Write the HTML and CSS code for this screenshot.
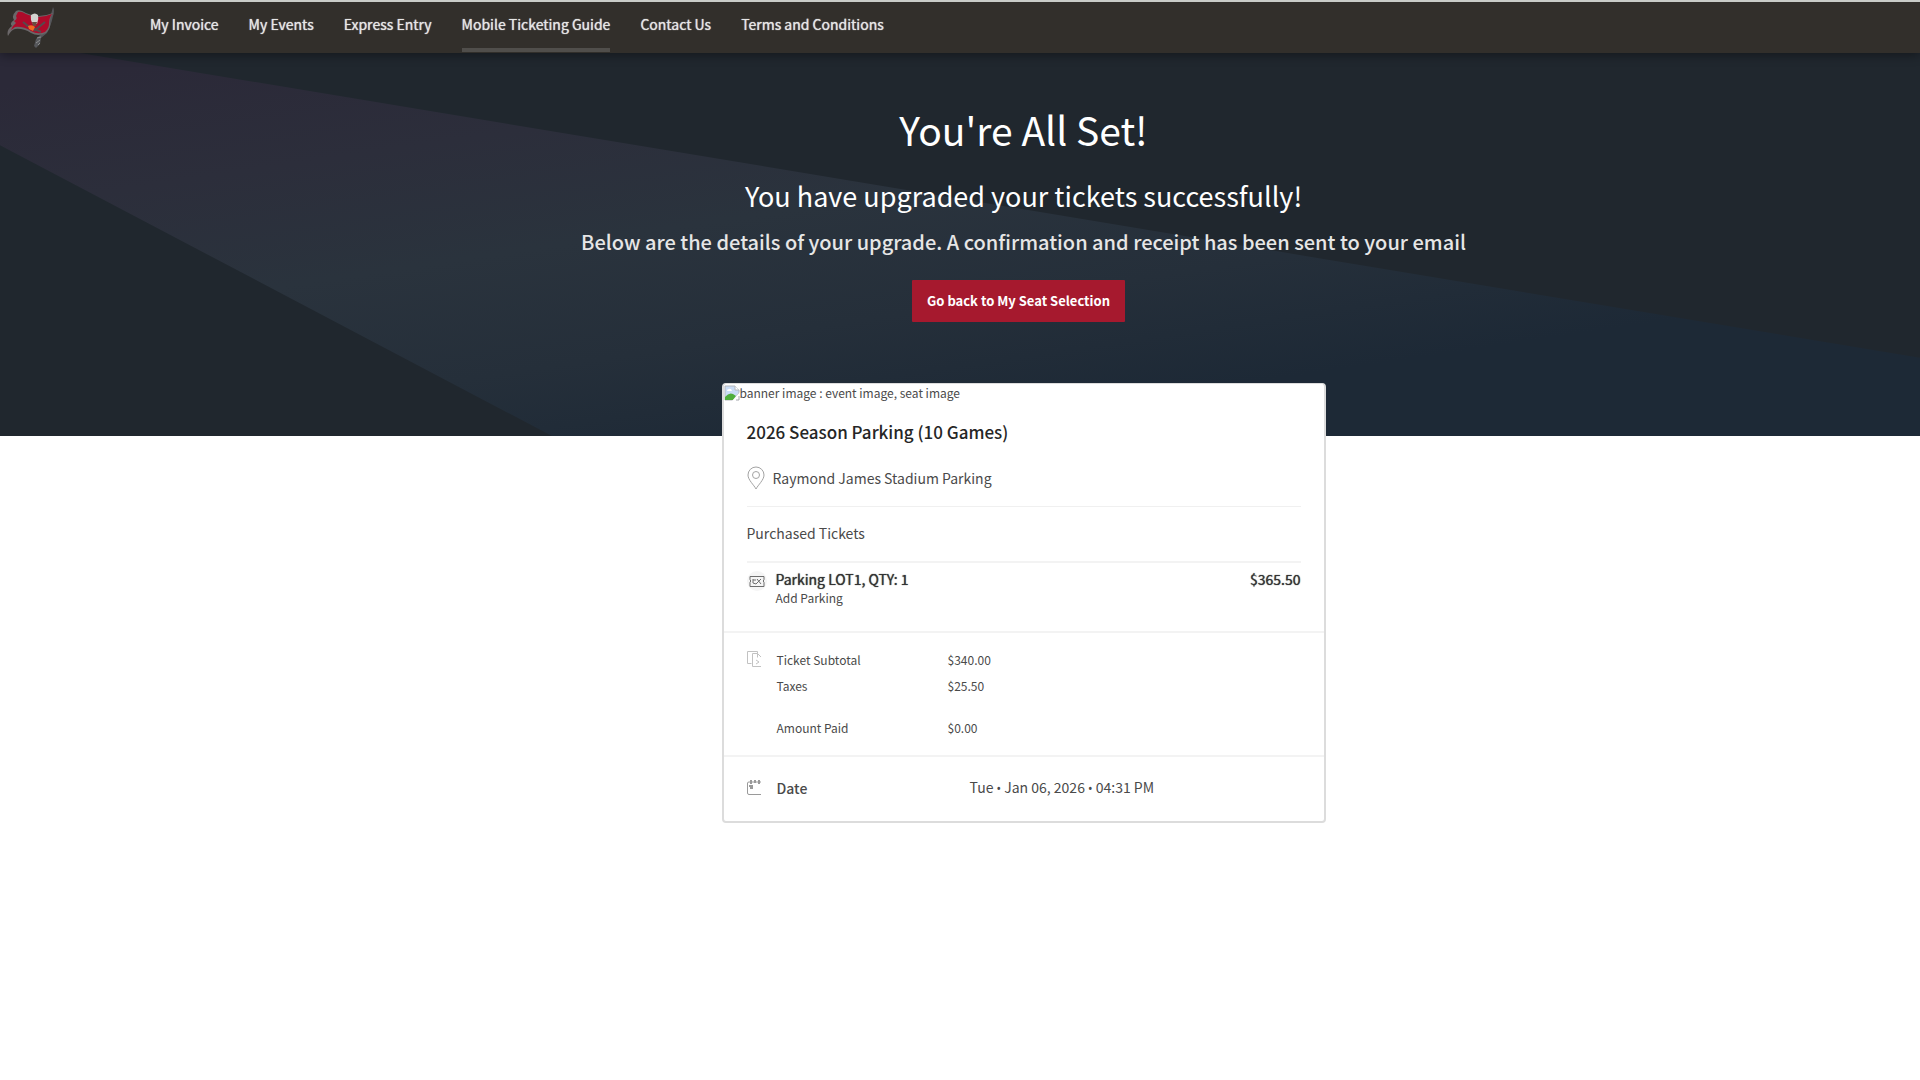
FILE: index.html
```html
<!DOCTYPE html>
<html lang="en">

<head>
    <meta charset="UTF-8" />
    <meta name="viewport" content="width=device-width, initial-scale=1" />
    <title>Upgrade Confirmation</title>
    <link rel="stylesheet" href="styles.css">
</head>

<body>
    <header class="topbar">
        <a class="logo" href="#" aria-label="Home">
            <svg viewBox="0 0 50 44" width="50" height="44">
                <path d="M46 1 Q48 5 46 10 Q44 20 40 27 L34 32 L33 38 L29 42 L27 40 L29 33 L34 28 L43 12 Z" fill="#55565a" />
                <path d="M9 5 Q13 3 19 7 Q31 13 46 7 Q43 11 43 17 Q44 22 39 27 Q31 31 24 27 Q16 22 8 23 Q4 24 1 30 Q-1 24 5 20 Q2 17 7 14 Q4 10 9 5 Z" fill="#6b6769" />
                <path d="M11 6 Q14 5 19 8 Q31 14 45 8 Q42 12 42 18 Q42 22 38 26 Q31 29 24 25 Q16 20 8 21 L4 24 Q5 20 9 17 L7 15 Q11 13 9 10 Z" fill="#ae0b2a" />
                <path d="M19 19 L34 26 M38 16 L27 25 M16 16 L21 20" stroke="#564a4d" stroke-width="2" fill="none" />
                <path d="M24 9 Q28 6 31 9 Q32 13 30 18 L26 18 Q23 14 24 9 Z" fill="#d2d2ce" />
                <path d="M25 16 L30 16 L29 20 L26 20 Z" fill="#6d4b3f" />
                <path d="M21 20 Q25 18 28 21 L26 25 L22 23 Z" fill="#f26a21" />
                <path d="M30 32 L34 31 M29 37 L33 34 M31 39 L33 37" stroke="#8b8c8d" stroke-width="1" />
            </svg>
        </a>
        <nav class="menu">
            <a href="#">My Invoice</a>
            <a href="#">My Events</a>
            <a href="#">Express Entry</a>
            <a href="#" class="active">Mobile Ticketing Guide</a>
            <a href="#">Contact Us</a>
            <a href="#">Terms and Conditions</a>
        </nav>
    </header>

    <section class="hero">
        <svg class="hero-bg" viewBox="0 0 1920 382" preserveAspectRatio="none" aria-hidden="true">
            <defs>
                <linearGradient id="beam" gradientUnits="userSpaceOnUse" x1="500" y1="-40" x2="570" y2="430">
                    <stop offset="0" stop-color="#2b2938" />
                    <stop offset="0.25" stop-color="#2c2e3b" />
                    <stop offset="0.5" stop-color="#2a333d" />
                    <stop offset="0.75" stop-color="#252f3a" />
                    <stop offset="1" stop-color="#1d2936" />
                </linearGradient>
            </defs>
            <polygon points="0,0 80,0 1920,304 1920,382 552,382 0,92" fill="url(#beam)" />
        </svg>
        <h1>You're All Set!</h1>
        <h2>You have upgraded your tickets successfully!</h2>
        <p>Below are the details of your upgrade. A confirmation and receipt has been sent to your email</p>
        <button type="button" class="back-btn">Go back to My Seat Selection</button>
    </section>

    <main>
        <div class="card">
            <div class="banner">
                <svg viewBox="0 0 16 16" width="16" height="16" aria-hidden="true">
                    <path d="M1 1 H11 L15 5 V8 L9 15 H1 Z" fill="#c9dcf5" stroke="#b5b8bd" />
                    <path d="M11 1 V5 H15" fill="#ffffff" stroke="#b5b8bd" />
                    <path d="M3 6 Q3 4 5 4 Q7 3 8 6 Z" fill="#ffffff" />
                    <path d="M1 15 V12 Q5 7 9 9 L12 11 L9 15 Z" fill="#4fae3c" />
                    <path d="M8 16 L16 7 V10 L11 16 Z" fill="#ffffff" />
                    <path d="M12 15 H15 V11" fill="none" stroke="#a5a8ad" />
                </svg>
                <span>banner image : event image, seat image</span>
            </div>

            <div class="event">
                <h3>2026 Season Parking (10 Games)</h3>
                <div class="venue">
                    <svg viewBox="0 0 18 24" width="18" height="24" fill="none" stroke="#a3a3a3" aria-hidden="true">
                        <path d="M9 23 C7 19 1 14 1 9 A8 8 0 0 1 17 9 C17 14 11 19 9 23 Z" />
                        <circle cx="9" cy="9" r="3.5" />
                    </svg>
                    <span>Raymond James Stadium Parking</span>
                </div>
                <div class="subhead">Purchased Tickets</div>
                <div class="ticket">
                    <svg viewBox="0 0 20 22" width="20" height="22" fill="none" stroke="#6e6e6e" aria-hidden="true">
                        <circle cx="10" cy="12" r="10" fill="#f5f5f5" stroke="none" />
                        <path d="M3 7.500 H17 V10.500 Q15.500 12 17 13.500 V17.500 H3 V13.500 Q4.500 12 3 10.500 Z" />
                        <path d="M6 10 V14 L9 15 L14 10 M10 10 L14 15 M6 11 H9" />
                    </svg>
                    <div class="ticket-name">
                        <strong>Parking LOT1, QTY: 1</strong>
                        <span>Add Parking</span>
                    </div>
                    <strong>$365.50</strong>
                </div>
            </div>

            <div class="totals">
                <svg viewBox="0 0 16 18" width="16" height="18" fill="none" stroke="#c2c2c2" aria-hidden="true">
                    <path d="M4.500 13.500 H0.500 V1.500 H10.500 V3.500" />
                    <path d="M14 16.500 H5.500 V3.500 H10.500 L14 7 M10.500 3.500 V7.500 M9 10 L12 12 L9 14" />
                </svg>
                <table>
                    <tr>
                        <th scope="row">Ticket Subtotal</th>
                        <td>$340.00</td>
                    </tr>
                    <tr>
                        <th scope="row">Taxes</th>
                        <td>$25.50</td>
                    </tr>
                    <tr class="paid">
                        <th scope="row">Amount Paid</th>
                        <td>$0.00</td>
                    </tr>
                </table>
            </div>

            <div class="date">
                <svg viewBox="0 0 16 18" width="16" height="18" fill="none" stroke="#9a9a9a" aria-hidden="true">
                    <path d="M14 15.500 H2 Q0.500 15.500 0.500 14 V4 Q0.500 3 2 3 H14" />
                    <path d="M4 1 V5 M8 1 V4 M12 1 V5" stroke-width="2" />
                    <path d="M2 7 H6 M3 9 H6" stroke-width="2" />
                </svg>
                <span class="date-label">Date</span>
                <span>Tue <span class="dot">•</span> Jan 06, 2026 <span class="dot">•</span> 04:31 PM</span>
            </div>
        </div>
    </main>
</body>

</html>
```
FILE: styles.css
```css
* {
    box-sizing: border-box;
}

body {
    margin: 0;
    background: #fff;
    color: #4a4a4a;
    font-family: "Noto Sans CJK SC", "Noto Sans", sans-serif;
    font-size: 14px;
    line-height: 20px;
}

h1, h2, h3, p {
    margin: 0;
    font-weight: 400;
}

svg {
    display: block;
    flex: none;
}

.topbar {
    position: relative;
    z-index: 1;
    display: flex;
    height: 53px;
    padding-bottom: 1px;
    background: #322f2b;
    border-top: 2px solid #c9ccc8;
    box-shadow: 0 2px 10px rgb(0 0 0 / 0.4);
}

.logo {
    width: 150px;
    padding: 4px 7px;
}

.menu {
    display: flex;
    gap: 30px;
}

.menu a {
    padding-top: 12px;
    color: #e6e6e6;
    text-decoration: none;
    text-shadow: 0 0 1px #e6e6e6;
    border-bottom: 4px solid transparent;
}

.menu .active {
    border-bottom-color: #504e4b;
}

.hero {
    position: relative;
    display: flex;
    flex-direction: column;
    align-items: center;
    padding: 46px 0 114px 127px;
    background: #20272e;
    color: #fff;
}

.hero-bg {
    position: absolute;
    inset: 0;
    width: 100%;
    height: 100%;
}

.hero h1, .hero h2, .hero p, .back-btn {
    position: relative;
}

.hero h1 {
    font-size: 39px;
    line-height: 60px;
}

.hero h2 {
    margin-top: 17px;
    font-size: 27px;
    line-height: 40px;
}

.hero p {
    margin-top: 10px;
    color: #e6e6e6;
    font-size: 20px;
    font-weight: 500;
    line-height: 32px;
}

.back-btn {
    height: 42px;
    margin: 22px 10px 0 0;
    padding: 0 15px 2px;
    border: none;
    border-radius: 1px;
    background: #a6192e;
    color: #fff;
    font-family: inherit;
    font-size: 13px;
    font-weight: 700;
    cursor: pointer;
}

main {
    display: flex;
    justify-content: center;
    padding-left: 127px;
}

.card {
    position: relative;
    width: 100%;
    max-width: 604px;
    margin-top: -53px;
    background: #fff;
    border: 2px solid #dcdcdc;
    border-top-width: 1px;
    border-radius: 4px;
}

.banner {
    display: flex;
    align-items: center;
    font-size: 12px;
    line-height: 18px;
}

.event {
    padding: 18px 23px 0;
}

.event h3 {
    color: #262626;
    font-size: 17px;
    font-weight: 500;
    line-height: 24px;
}

.venue {
    display: flex;
    align-items: center;
    gap: 8px;
    padding: 22px 0 16px;
    border-bottom: 1px solid #f0f0f0;
}

.subhead {
    padding: 16px 0 18px;
    border-bottom: 2px solid #f3f3f3;
}

.ticket {
    display: flex;
    gap: 9px;
    padding: 6px 0 24px;
}

.ticket-name {
    flex: 1;
}

.ticket strong {
    display: block;
    color: #333;
    font-weight: 400;
    text-shadow: 0 0 1px #333;
}

.ticket span {
    display: block;
    font-size: 12px;
    line-height: 18px;
}

.totals {
    display: flex;
    gap: 14px;
    padding: 14px 23px;
    border-top: 2px solid #f3f3f3;
    font-size: 12px;
}

.totals svg {
    margin-top: 3px;
}

.totals table {
    border-collapse: collapse;
}

.totals th, .totals td {
    height: 26px;
    padding: 0;
    font-weight: 400;
    text-align: left;
}

.totals th {
    width: 171px;
}

.totals .paid th, .totals .paid td {
    height: 42px;
    padding-top: 16px;
}

.date {
    display: flex;
    align-items: center;
    gap: 14px;
    padding: 20px 23px 22px;
    border-top: 2px solid #f3f3f3;
}

.date-label {
    width: 179px;
    font-weight: 500;
}

.dot {
    font-family: "Noto Sans", sans-serif;
    font-size: 12px;
}
```
